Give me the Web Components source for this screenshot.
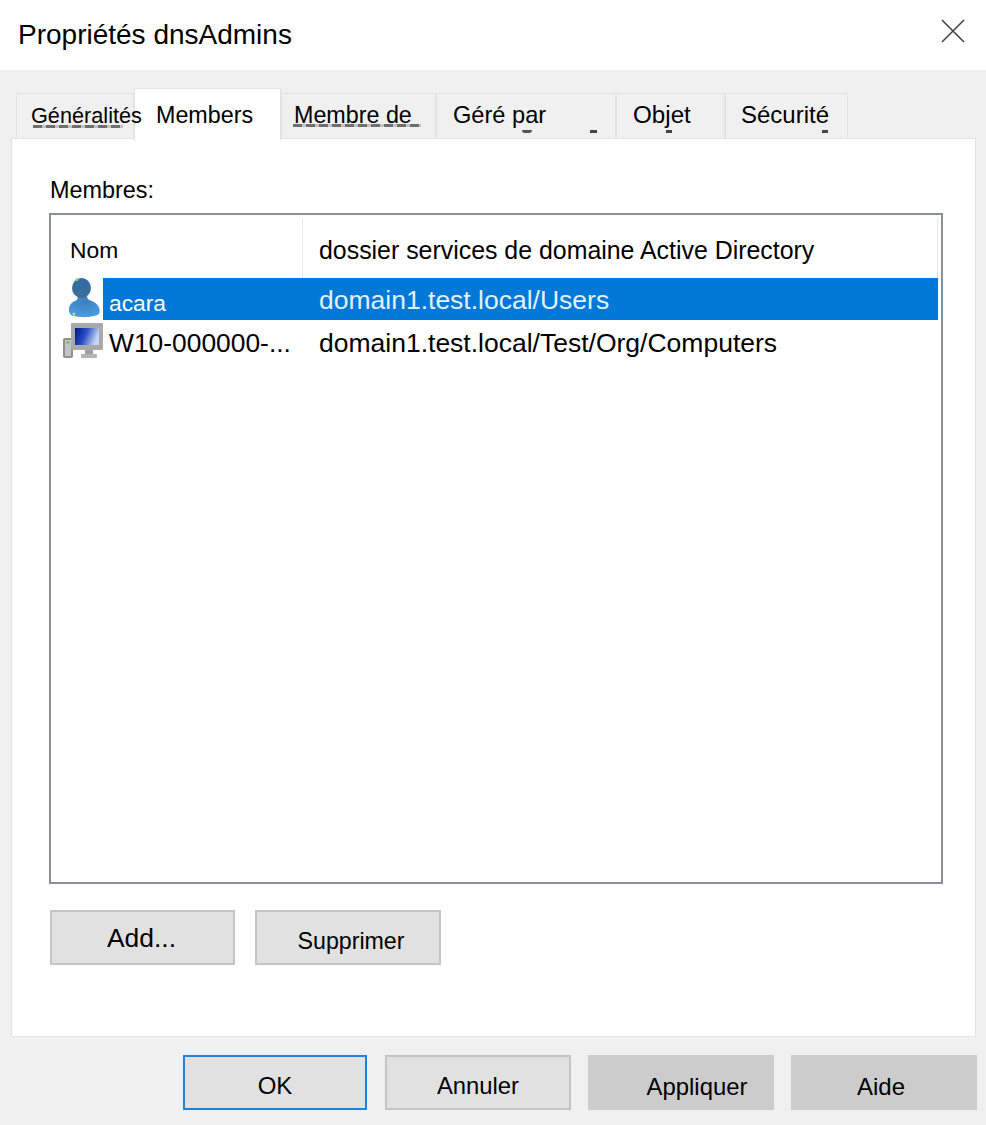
<!DOCTYPE html>
<html lang="fr">
<head>
<meta charset="utf-8">
<title>Propriétés dnsAdmins</title>
<style>
    html, body { margin: 0; padding: 0; background: #f0f0f0; }
</style>
</head>
<body>
<prop-dialog titre="Propriétés dnsAdmins">
    <tab-strip slot="tabs">
        <prop-tab style="--w:118px; --size:21.7px; --pad:14px" smudge="general">Généralités</prop-tab>
        <prop-tab style="--w:147px; --size:23.3px; --pad:21px" active>Members</prop-tab>
        <prop-tab style="--w:155px; --size:23.3px; --pad:12px" smudge="membre">Membre de</prop-tab>
        <prop-tab style="--w:180px; --size:23.6px; --pad:16px" smudge="gere">Géré par</prop-tab>
        <prop-tab style="--w:109px; --size:24.2px; --pad:16px; --lh:41px" smudge="objet">Objet</prop-tab>
        <prop-tab style="--w:123px; --size:24px; --pad:15px; --lh:41px" smudge="securite">Sécurité</prop-tab>
    </tab-strip>
    <members-panel slot="panel">
        <member-list>
            <member-row icon="user" nom="acara" dossier="domain1.test.local/Users" selected></member-row>
            <member-row icon="computer" nom="W10-000000-..." dossier="domain1.test.local/Test/Org/Computers"></member-row>
        </member-list>
        <win-button slot="actions" style="--size:26.4px; --shift:1px; --dx:-1px">Add...</win-button>
        <win-button slot="actions" style="--size:23.2px; --w:186px; --shift:4px; --dx:3px">Supprimer</win-button>
    </members-panel>
    <win-button slot="footer" focused style="--size:24px; --w:184px; --shift:3px">OK</win-button>
    <win-button slot="footer" style="--size:23.8px; --w:186px; --ml:18px; --shift:3px">Annuler</win-button>
    <win-button slot="footer" flat style="--size:23.9px; --w:186px; --ml:17px; --shift:4px; --dx:16px">Appliquer</win-button>
    <win-button slot="footer" flat style="--size:24px; --w:186px; --ml:17px; --shift:4px; --dx:-3px">Aide</win-button>
</prop-dialog>

<script>
class PropDialog extends HTMLElement {
    constructor() {
        super();
        this._shadow = this.attachShadow({ mode: 'open' });
    }
    connectedCallback() {
        this._shadow.innerHTML = `
            <style>
                :host {
                    display: block;
                    width: 986px;
                    height: 1125px;
                    overflow: hidden;
                    background: #f0f0f0;
                    color: #000;
                    font-family: 'Liberation Sans', Arial, sans-serif;
                }
                header {
                    height: 70px;
                    background: #fff;
                    display: flex;
                    align-items: center;
                    justify-content: space-between;
                    padding: 0 21px 0 18px;
                    box-sizing: border-box;
                }
                h1 {
                    margin: 0;
                    font-size: 28px;
                    font-weight: 400;
                    line-height: 70px;
                }
                svg { display: block; margin-top: -9px; }
                .tabs { display: block; padding: 18px 0 0 16px; position: relative; z-index: 1; }
                .panel { display: block; margin-left: 11px; margin-top: -3px; }
                footer {
                    display: flex;
                    padding: 18px 0 0 183px;
                }
            </style>
            <header>
                <h1>${this.getAttribute('titre')}</h1>
                <svg width="24" height="24" viewBox="0 0 24 24" fill="none" stroke="#444" stroke-width="1.6">
                    <path d="M1 1 L23 23 M23 1 L1 23"/>
                </svg>
            </header>
            <div class="tabs"><slot name="tabs"></slot></div>
            <div class="panel"><slot name="panel"></slot></div>
            <footer><slot name="footer"></slot></footer>
        `;
    }
}

class TabStrip extends HTMLElement {
    constructor() {
        super();
        this._shadow = this.attachShadow({ mode: 'open' });
        this._shadow.innerHTML = `
            <style>
                :host { display: flex; align-items: flex-start; height: 53px; }
            </style>
            <slot></slot>
        `;
    }
}

class PropTab extends HTMLElement {
    constructor() {
        super();
        this._shadow = this.attachShadow({ mode: 'open' });
    }
    connectedCallback() {
        const dash = 'repeating-linear-gradient(90deg,#6f6f6f 0 9px,rgba(111,111,111,.35) 9px 13px)';
        const smudges = {
            general: `<i style="left:16px;top:31px;width:90px;height:3px;background:${dash}"></i>`,
            membre: `<i style="left:11px;top:30px;width:128px;height:3px;background:${dash}"></i>`,
            gere: '<i style="left:85px;top:36px;width:10px;height:3px;border-radius:0 0 5px 5px;background:#555"></i><i style="left:153px;top:36px;width:7px;height:3px;background:#444"></i>',
            objet: '<i style="left:49px;top:36px;width:6px;height:3px;background:#444"></i>',
            securite: '<i style="left:96px;top:36px;width:6px;height:3px;background:#444"></i>'
        };
        this._shadow.innerHTML = `
            <style>
                :host {
                    display: block;
                    box-sizing: border-box;
                    position: relative;
                    flex: none;
                    width: var(--w);
                    height: 45px;
                    margin-top: 5px;
                    background: #f0f0f0;
                    border: 1px solid #e3e3e3;
                    border-width: 1px 1px 0 1px;
                    font-size: var(--size);
                    line-height: var(--lh, 43px);
                    padding-left: var(--pad);
                    white-space: nowrap;
                }
                :host([active]) {
                    height: 53px;
                    margin-top: 0;
                    background: #fff;
                    line-height: 53px;
                }
                i { position: absolute; display: block; }
                span { position: relative; z-index: 2; }
            </style>
            ${smudges[this.getAttribute('smudge')] || ''}
            <span><slot></slot></span>
        `;
    }
}

class MembersPanel extends HTMLElement {
    constructor() {
        super();
        this._shadow = this.attachShadow({ mode: 'open' });
        this._shadow.innerHTML = `
            <style>
                :host {
                    display: block;
                    box-sizing: border-box;
                    width: 965px;
                    height: 899px;
                    background: #fff;
                    border: 1px solid #e3e3e3;
                    padding: 38px 0 0 37px;
                }
                label {
                    display: block;
                    font-size: 23.4px;
                    line-height: 27px;
                    padding-left: 1px;
                    margin-bottom: 9px;
                }
                .actions { display: flex; gap: 20px; margin-top: 26px; padding-left: 1px; }
            </style>
            <label>Membres:</label>
            <slot></slot>
            <div class="actions"><slot name="actions"></slot></div>
        `;
    }
}

class MemberList extends HTMLElement {
    constructor() {
        super();
        this._shadow = this.attachShadow({ mode: 'open' });
        this._shadow.innerHTML = `
            <style>
                :host {
                    display: block;
                    box-sizing: border-box;
                    width: 894px;
                    height: 671px;
                    border: 2px solid #8b8f96;
                    background: #fff;
                    padding: 3px 3px 0 0;
                }
                .head { display: flex; height: 60px; font-size: 22.8px; line-height: 64px; }
                .nom { box-sizing: border-box; width: 252px; padding-left: 19px; border-right: 1px solid #e8e8e8; }
                .dir { padding-left: 16px; font-size: 24.9px; line-height: 64px; border-right: 1px solid #e8e8e8; flex: 1; }
            </style>
            <div class="head">
                <div class="nom">Nom</div>
                <div class="dir">dossier services de domaine Active Directory</div>
            </div>
            <slot></slot>
        `;
    }
}

class MemberRow extends HTMLElement {
    constructor() {
        super();
        this._shadow = this.attachShadow({ mode: 'open' });
    }
    connectedCallback() {
        const icons = {
            user: `<svg width="42" height="42" viewBox="0 0 42 42">
                <defs>
                    <radialGradient id="u" cx="50%" cy="30%" r="75%"><stop offset="0" stop-color="#3a80c0"/><stop offset="1" stop-color="#4f9ede"/></radialGradient>
                    <linearGradient id="h" x1="0" y1="0" x2="0" y2="1"><stop offset="0" stop-color="#2c6da6"/><stop offset="1" stop-color="#3f6f96"/></linearGradient>
                </defs>
                <path d="M8 37 C4 33 6 25 12 23 C15 22 15 20 14 17 L24 17 C24 20 25 22 29 23 C36 26 38 32 36 36 C30 40 14 40 8 37Z" fill="url(#u)"/>
                <ellipse cx="18.5" cy="10" rx="9.5" ry="10" fill="url(#h)"/>
                <circle cx="14" cy="1.6" r="1.5" fill="#86dc72"/>
                <circle cx="11" cy="36" r="1.5" fill="#a6e690"/>
            </svg>`,
            computer: `<svg class="pc" width="42" height="36" viewBox="0 0 42 36">
                <defs>
                    <linearGradient id="c" x1="0" y1="0" x2="1" y2="0.3"><stop offset="0" stop-color="#00109a"/><stop offset="0.5" stop-color="#2a4fc4"/><stop offset="1" stop-color="#c5d4f0"/></linearGradient>
                </defs>
                <rect x="0" y="15" width="10" height="20" rx="2" fill="#8f8f8f"/>
                <rect x="2" y="17" width="6" height="16" fill="#c4c4c4"/>
                <rect x="3.5" y="18" width="3" height="3" fill="#6fd24f"/>
                <rect x="8" y="0" width="32" height="27" rx="1" fill="#a9a9a9"/>
                <rect x="12" y="5" width="24" height="17" fill="url(#c)"/>
                <rect x="22" y="27" width="8" height="5" fill="#a0a0a0"/>
                <rect x="18" y="31" width="16" height="4" rx="1" fill="#b4b4b4"/>
            </svg>`
        };
        this._shadow.innerHTML = `
            <style>
                :host {
                    display: block;
                    height: 42px;
                    position: relative;
                    font-size: 26.5px;
                    line-height: 46px;
                    white-space: nowrap;
                }
                .row { display: flex; height: 42px; }
                .ico { flex: none; width: 52px; }
                .ico svg { display: block; margin-left: 12px; }
                .ico svg.pc { margin-top: 3px; }
                .nom { box-sizing: border-box; width: 200px; padding-left: 6px; font-size: 26.4px; }
                .dir { padding-left: 16px; flex: 1; }
                :host([selected]) .sel { background: #0078d7; }
                .sel { display: flex; flex: 1; }
                :host([selected]) .nom { color: #fff; font-size: 22.8px; line-height: 50px; }
                :host([selected]) .dir { color: #e4f0fb; line-height: 44px; }
            </style>
            <div class="row">
                <div class="ico">${icons[this.getAttribute('icon')]}</div>
                <div class="sel">
                    <div class="nom">${this.getAttribute('nom')}</div>
                    <div class="dir">${this.getAttribute('dossier')}</div>
                </div>
            </div>
        `;
    }
}

class WinButton extends HTMLElement {
    constructor() {
        super();
        this._shadow = this.attachShadow({ mode: 'open' });
        this._shadow.innerHTML = `
            <style>
                :host {
                    display: block;
                    box-sizing: border-box;
                    flex: none;
                    width: var(--w, 185px);
                    height: 55px;
                    margin-left: var(--ml, 0);
                    background: #e1e1e1;
                    border: 2px solid #c4c4c4;
                    font-size: var(--size);
                    line-height: 51px;
                    text-align: center;
                }
                :host([focused]) { border-color: #1a84e0; }
                :host([flat]) { background: #cccccc; border-color: #cccccc; }
                span { position: relative; top: var(--shift, 0); left: var(--dx, 0); }
            </style>
            <span><slot></slot></span>
        `;
    }
}

customElements.define('prop-dialog', PropDialog);
customElements.define('tab-strip', TabStrip);
customElements.define('prop-tab', PropTab);
customElements.define('members-panel', MembersPanel);
customElements.define('member-list', MemberList);
customElements.define('member-row', MemberRow);
customElements.define('win-button', WinButton);
</script>
</body>
</html>
